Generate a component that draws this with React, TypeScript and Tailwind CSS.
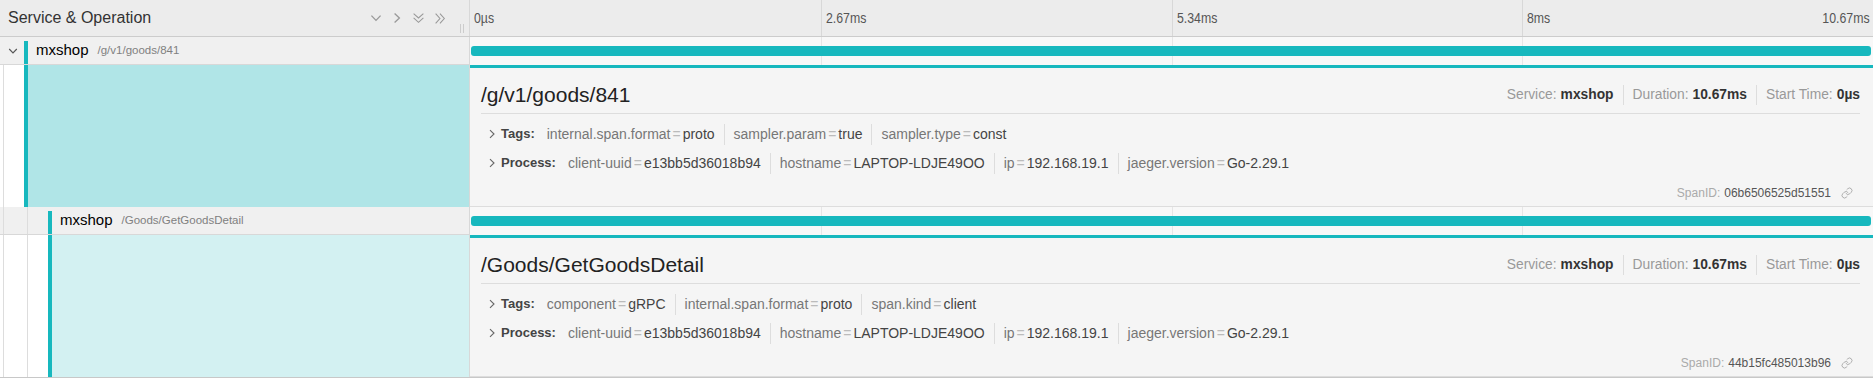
import React from 'react';
import { Link } from 'lucide-react';

// Trace timeline view: two expanded spans
type KV = [string, string];

interface Span {
  depth: number;
  service: string;
  operation: string;
  spanId: string;
  tags: KV[];
  process: KV[];
  accent: string;
  hasChildren: boolean;
}

const TEAL = '#17b8be';

const processTags: KV[] = [
  ['client-uuid', 'e13bb5d36018b94'],
  ['hostname', 'LAPTOP-LDJE49OO'],
  ['ip', '192.168.19.1'],
  ['jaeger.version', 'Go-2.29.1'],
];

const spans: Span[] = [
  {
    depth: 0,
    service: 'mxshop',
    operation: '/g/v1/goods/841',
    spanId: '06b6506525d51551',
    tags: [
      ['internal.span.format', 'proto'],
      ['sampler.param', 'true'],
      ['sampler.type', 'const'],
    ],
    process: processTags,
    accent: 'bg-[#b0e5e7]',
    hasChildren: true,
  },
  {
    depth: 1,
    service: 'mxshop',
    operation: '/Goods/GetGoodsDetail',
    spanId: '44b15fc485013b96',
    tags: [
      ['component', 'gRPC'],
      ['internal.span.format', 'proto'],
      ['span.kind', 'client'],
    ],
    process: processTags,
    accent: 'bg-[#d3f1f2]',
    hasChildren: false,
  },
];

const ticks = ['0µs', '2.67ms', '5.34ms', '8ms'];

function Chevron({ dir, size = 10, className }: { dir: 'down' | 'right'; size?: number; className?: string }) {
  return (
    <svg width={size} height={size} viewBox="0 0 10 10" className={className}>
      {dir === 'down' ? (
        <polyline points="1.2,3 5,7 8.8,3" fill="none" stroke="currentColor" strokeWidth="1.1" />
      ) : (
        <polyline points="3,1.2 7,5 3,8.8" fill="none" stroke="currentColor" strokeWidth="1.1" />
      )}
    </svg>
  );
}

function DoubleChevron({ dir }: { dir: 'down' | 'right' }) {
  return (
    <svg width="13" height="13" viewBox="0 0 12 12" className="text-[#999]">
      {dir === 'down' ? (
        <g fill="none" stroke="currentColor" strokeWidth="1">
          <polyline points="1.5,1.5 6,5.5 10.5,1.5" />
          <polyline points="1.5,5.5 6,9.5 10.5,5.5" />
        </g>
      ) : (
        <g fill="none" stroke="currentColor" strokeWidth="1">
          <polyline points="1.5,1.5 5.5,6 1.5,10.5" />
          <polyline points="5.5,1.5 9.5,6 5.5,10.5" />
        </g>
      )}
    </svg>
  );
}

function Guide() {
  return (
    <div className="w-[24px] h-full shrink-0 pl-[3px]">
      <div className="h-full border-l border-[#ddd]" />
    </div>
  );
}

function GridLines() {
  return (
    <div className="absolute inset-0 grid grid-cols-4 pointer-events-none">
      <div />
      <div className="border-l border-[#e6e6e6]" />
      <div className="border-l border-[#e6e6e6]" />
      <div className="border-l border-[#e6e6e6]" />
    </div>
  );
}

function Header() {
  return (
    <div className="flex h-[37px] bg-[#ececec] border-b border-[#ccc]">
      <div className="relative w-[470px] shrink-0 flex items-center pl-2 border-r border-[#d8d8d8]">
        <span className="text-[16px] text-[#333]">Service &amp; Operation</span>
        <div className="ml-auto mr-[22px] flex items-center gap-[9px] text-[#999]">
          <Chevron dir="down" size={12} className="text-[#999]" />
          <Chevron dir="right" size={12} className="text-[#999]" />
          <DoubleChevron dir="down" />
          <DoubleChevron dir="right" />
        </div>
        <div className="absolute right-[5px] top-[24px] flex gap-[2px]">
          <div className="w-px h-[9px] bg-[#ccc]" />
          <div className="w-px h-[9px] bg-[#ccc]" />
        </div>
      </div>
      <div className="flex-1 grid grid-cols-4 text-[15px] text-[#555]">
        {ticks.map((t, i) => (
          <div key={t} className={`flex items-center justify-between pl-[4px] pr-[3px] ${i > 0 ? 'border-l border-[#d8d8d8]' : ''}`}>
            <span className="inline-block scale-x-[0.82] origin-left">{t}</span>
            {i === 3 && <span className="inline-block scale-x-[0.82] origin-right">10.67ms</span>}
          </div>
        ))}
      </div>
    </div>
  );
}

function SpanRow({ span }: { span: Span }) {
  return (
    <div className="flex h-[28px]">
      <div className="w-[470px] shrink-0 flex bg-[#f0f0f0] border-b border-r border-[#d8d8d8]">
        {span.depth > 0 ? (
          Array.from({ length: span.depth + 1 }).map((_, i) => <Guide key={i} />)
        ) : (
          <div className="w-[24px] shrink-0 flex items-center pl-[8px] text-[#555]">
            <Chevron dir="down" />
          </div>
        )}
        <div className="w-[4px] shrink-0 mt-[4px]" style={{ background: TEAL }} />
        <div className="flex items-center pl-[8px] gap-[9px] whitespace-nowrap">
          <span className="text-[15px] text-[#000]">{span.service}</span>
          <span className="text-[11.5px] text-[#808080]">{span.operation}</span>
        </div>
      </div>
      <div className="relative flex-1 bg-[#f8f8f8] flex items-center pl-[1px] pr-[2px]">
        <GridLines />
        <div className="relative w-full h-[10px] rounded-[3px]" style={{ background: TEAL }} />
      </div>
    </div>
  );
}

function Summary({ label, items }: { label: string; items: KV[] }) {
  return (
    <div className="flex items-center h-[20px] pl-[6px] whitespace-nowrap">
      <Chevron dir="right" className="text-[#666]" />
      <span className="ml-[4px] font-bold text-[13px] text-[#444]">{label}:</span>
      <div className="flex items-center ml-[12px] text-[14px]">
        {items.map(([k, v], i) => (
          <div key={k} className={`flex items-center ${i > 0 ? 'border-l border-[#ddd] ml-[9px] pl-[9px]' : ''}`}>
            <span className="text-[#777]">{k}</span>
            <span className="text-[#bbb] px-[2px]">=</span>
            <span className="text-[#444]">{v}</span>
          </div>
        ))}
      </div>
    </div>
  );
}

function Meta({ label, value, first }: { label: string; value: string; first?: boolean }) {
  return (
    <div className={`flex items-center ${first ? '' : 'border-l border-[#ddd] ml-[9px] pl-[9px]'}`}>
      <span className="text-[#999]">{label}:</span>
      <span className="ml-[4px] font-bold text-[#333]">{value}</span>
    </div>
  );
}

function SpanDetail({ span }: { span: Span }) {
  return (
    <div className="flex h-[142px]">
      <div className="w-[470px] shrink-0 flex border-r border-[#d8d8d8]">
        {Array.from({ length: span.depth + 1 }).map((_, i) => (
          <Guide key={i} />
        ))}
        <div className="w-[4px] shrink-0" style={{ background: TEAL }} />
        <div className={`flex-1 ${span.accent}`} />
      </div>
      <div className="flex-1 flex flex-col bg-[#f5f5f5] border-t-[3px] border-b border-b-[#ddd] pl-[11px] pr-[13px]" style={{ borderTopColor: TEAL }}>
        <div className="flex items-center justify-between pt-[15px] pb-[6px] border-b border-[#ddd]">
          <span className="text-[21px] leading-[24px] text-[#222]">{span.operation}</span>
          <div className="flex items-center text-[13.8px] whitespace-nowrap">
            <Meta label="Service" value={span.service} first />
            <Meta label="Duration" value="10.67ms" />
            <Meta label="Start Time" value="0µs" />
          </div>
        </div>
        <div className="mt-[10px]">
          <Summary label="Tags" items={span.tags} />
        </div>
        <div className="mt-[9px]">
          <Summary label="Process" items={span.process} />
        </div>
        <div className="mt-[12px] h-[16px] flex items-center justify-end mr-[7px] text-[12px]">
          <span className="text-[#aaa]">SpanID:</span>
          <span className="ml-[4px] text-[#555]">{span.spanId}</span>
          <Link size={12} strokeWidth={1.5} className="ml-[10px] text-[#999]" />
        </div>
      </div>
    </div>
  );
}

export default function App() {
  return (
    <div className="w-[1873px] h-[384px] bg-white font-['Liberation_Sans',Arial,sans-serif] overflow-hidden">
      <Header />
      <div className="border-b border-[#c8c8c8]">
        {spans.map((s) => (
          <React.Fragment key={s.spanId}>
            <SpanRow span={s} />
            <SpanDetail span={s} />
          </React.Fragment>
        ))}
      </div>
    </div>
  );
}
